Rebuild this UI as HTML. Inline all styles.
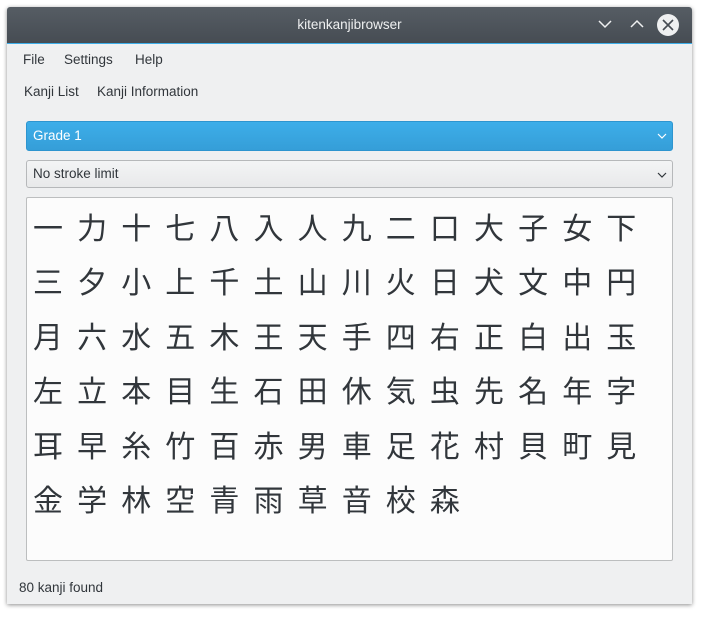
<!DOCTYPE html>
<html><head><meta charset="utf-8"><style>
body{margin:0;width:705px;height:617px;background:#fff;font-family:"Liberation Sans","Noto Sans CJK JP",sans-serif;font-size:13.5px;color:#31363b;position:relative;overflow:hidden}
.win{position:absolute;left:7px;top:7px;width:685px;height:597px;background:#eff0f1;box-shadow:0 1px 4px rgba(0,0,0,.45);border-radius:3px 3px 0 0}
.title{position:absolute;left:0;top:0;width:685px;height:36px;background:linear-gradient(#565d64,#464c53);border-bottom:1px solid #3daee9;border-radius:3px 3px 0 0;color:#eff0f1;text-align:center;line-height:36px;font-size:13.5px}
.t{position:absolute;font-size:13.5px}
.combo{position:absolute;left:19px;width:647px;border-radius:3px;box-sizing:border-box}
.grid{position:absolute;left:19px;top:190px;width:647px;height:364px;background:#fcfcfc;border:1px solid #bcbebf;box-sizing:border-box;border-radius:2px}
.k{position:absolute;width:44px;text-align:center;font-family:"Noto Sans CJK JP",sans-serif;font-size:30px;line-height:40px;color:#31363b}
</style></head><body>
<div class="win">
<div class="title">kitenkanjibrowser
<svg style="position:absolute;left:590px;top:11px" width="16" height="12"><path d="M2 3l6 6 6-6" stroke="#eff0f1" stroke-width="1.5" fill="none"/></svg>
<svg style="position:absolute;left:622px;top:11px" width="16" height="12"><path d="M2 9l6-6 6 6" stroke="#eff0f1" stroke-width="1.5" fill="none"/></svg>
<svg style="position:absolute;left:649px;top:6px" width="24" height="24"><circle cx="12" cy="12" r="11" fill="#eff0f1"/><path d="M7 7l10 10M17 7L7 17" stroke="#464c53" stroke-width="1.6"/></svg>
</div>
<div class="t" style="left:16px;top:45px">File</div>
<div class="t" style="left:57px;top:45px">Settings</div>
<div class="t" style="left:128px;top:45px">Help</div>
<div class="t" style="left:17px;top:77px">Kanji List</div>
<div class="t" style="left:90px;top:77px">Kanji Information</div>
<div class="combo" style="top:114px;height:30px;background:linear-gradient(#3daee9,#359ed8);border:1px solid #2e95cf;color:#fff;line-height:28px;padding-left:6px">Grade 1
<svg style="position:absolute;right:5px;top:10px" width="10" height="8"><path d="M1 2l4 4 4-4" stroke="#fff" stroke-width="1.2" fill="none"/></svg></div>
<div class="combo" style="top:153px;height:28px;background:linear-gradient(#f3f4f5,#e8e9ea);border:1px solid #b6b8ba;line-height:26px;padding-left:6px">No stroke limit
<svg style="position:absolute;right:5px;top:10px" width="10" height="8"><path d="M1 2l4 4 4-4" stroke="#31363b" stroke-width="1.2" fill="none"/></svg></div>
<div class="grid" id="g"></div>
<div class="t" style="left:12px;top:573px">80 kanji found</div>
</div>
<script>
var s="一力十七八入人九二口大子女下三夕小上千土山川火日犬文中円月六水五木王天手四右正白出玉左立本目生石田休気虫先名年字耳早糸竹百赤男車足花村貝町見金学林空青雨草音校森";
var g=document.getElementById('g'),h='';
for(var i=0;i<s.length;i++){var c=i%14,r=Math.floor(i/14);
h+='<div class="k" style="left:'+(-1+c*44.1)+'px;top:'+(8+r*54.4)+'px">'+s[i]+'</div>';}
g.innerHTML=h;
</script>
</body></html>
